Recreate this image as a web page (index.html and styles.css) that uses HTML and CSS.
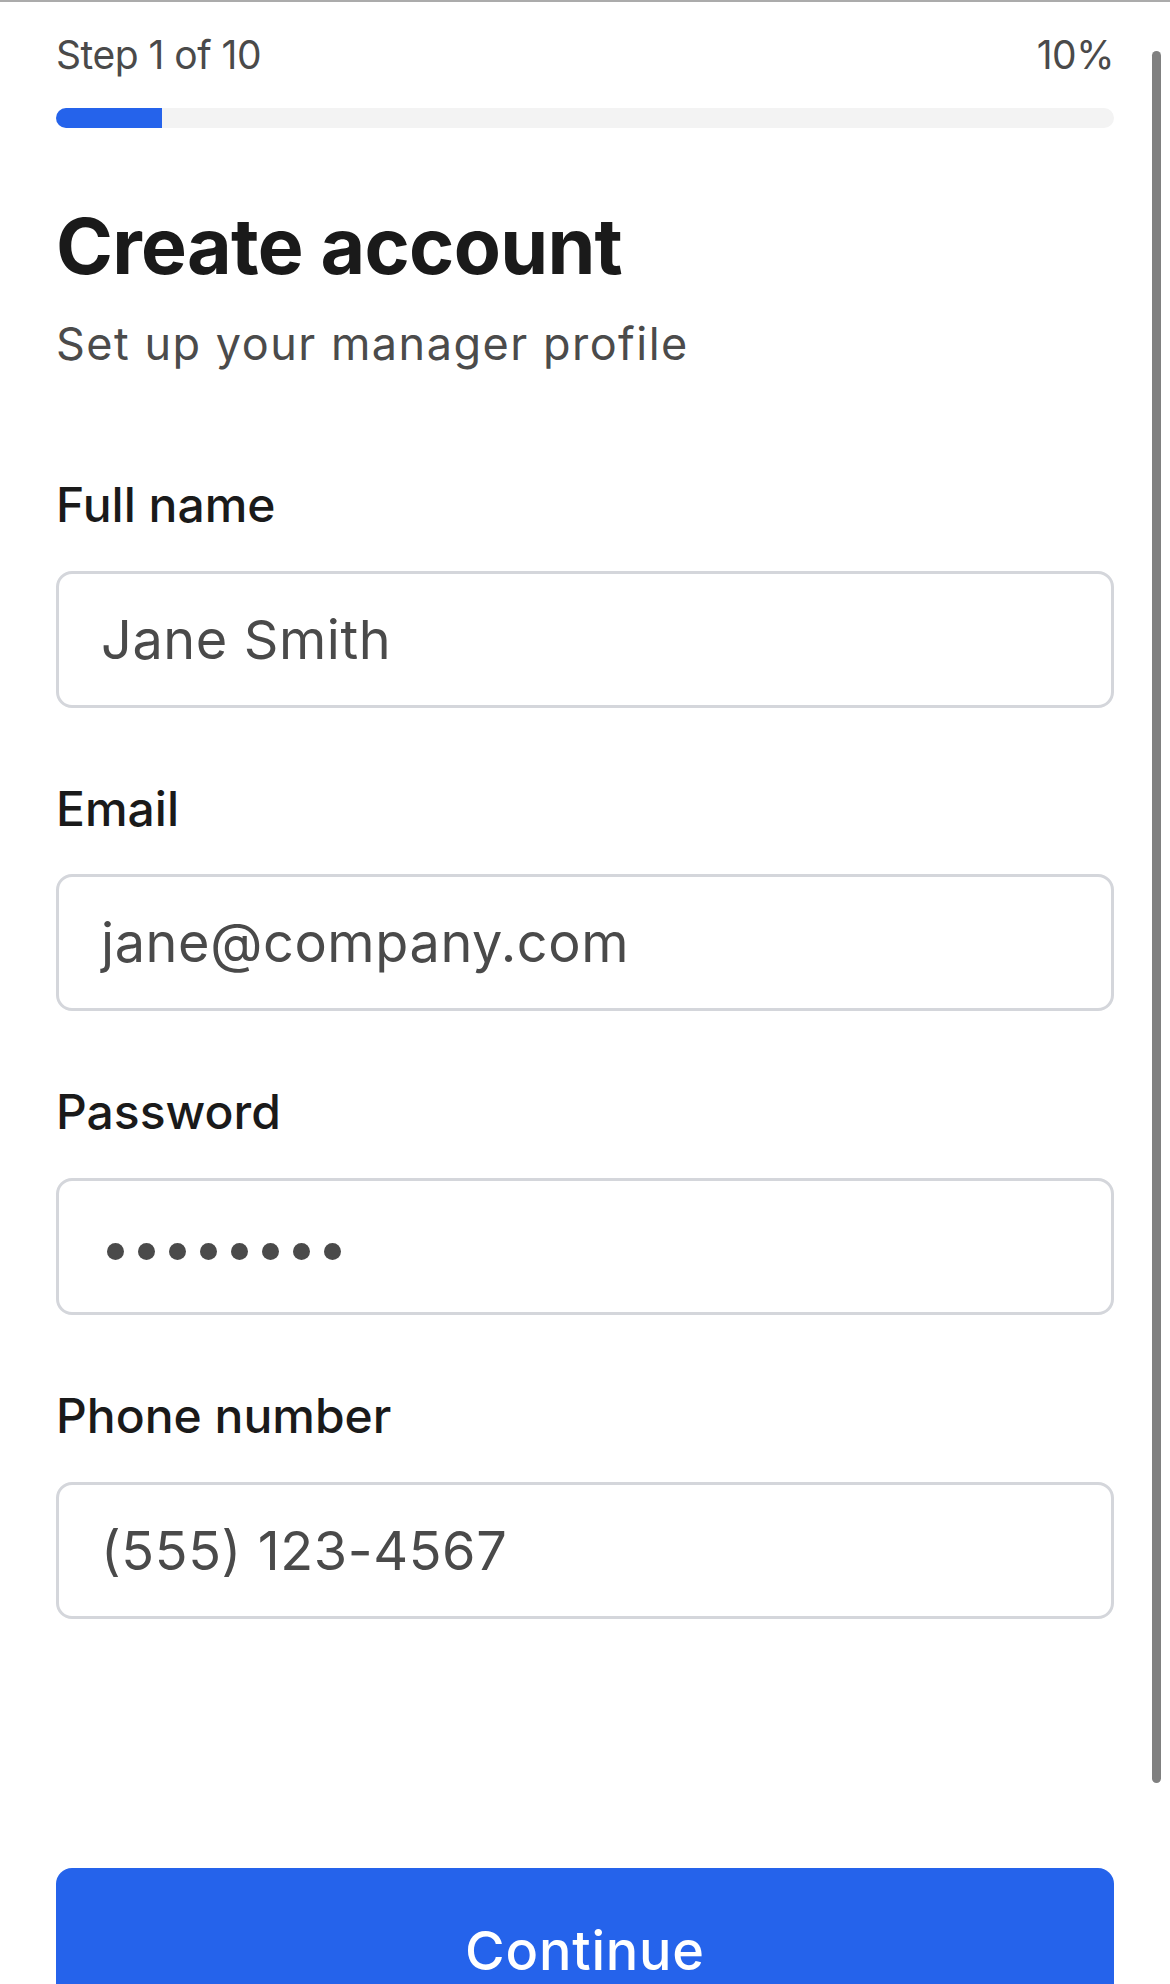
FILE: index.html
```html
<!DOCTYPE html>
<html lang="en">
<head>
<meta charset="utf-8">
<title>Create account</title>
<link rel="stylesheet" href="styles.css">
</head>
<body>
<div class="screen">
  <header class="progress-head">
    <div class="progress-meta">
      <span>Step 1 of 10</span>
      <span>10%</span>
    </div>
    <div class="track"><div class="fill" style="width:10%"></div></div>
  </header>

  <section class="intro">
    <h1 class="title">Create account</h1>
    <p class="subtitle">Set up your manager profile</p>
  </section>

  <form class="form">
    <div class="field">
      <label class="label">Full name</label>
      <div class="input">Jane Smith</div>
    </div>
    <div class="field">
      <label class="label">Email</label>
      <div class="input">jane@company.com</div>
    </div>
    <div class="field">
      <label class="label">Password</label>
      <div class="input" aria-label="password">
        <span class="dots"><i></i><i></i><i></i><i></i><i></i><i></i><i></i><i></i></span>
      </div>
    </div>
    <div class="field">
      <label class="label">Phone number</label>
      <div class="input">(555) 123-4567</div>
    </div>
  </form>

  <div class="footer">
    <button class="primary" type="button">Continue</button>
  </div>

  <div class="scrollbar"></div>
</div>
</body>
</html>
```
FILE: styles.css
```css
* { box-sizing: border-box; }
html, body { margin: 0; padding: 0; background: #ffffff; }
body {
  font-family: Inter, "Noto Sans", "Liberation Sans", sans-serif;
  color: #1a1a1a;
  overflow: hidden;
}
.screen {
  position: relative;
  height: 1984px;
  border-top: 2px solid #ababab;
  padding: 30px 56px 0 56px;
}
.progress-meta {
  display: flex;
  justify-content: space-between;
  font-size: 39px;
  line-height: 1.2;
  letter-spacing: -0.5px;
  color: #4a4a4a;
}
.track {
  margin-top: 29px;
  height: 20px;
  background: #f3f3f3;
  border-radius: 10px;
  overflow: hidden;
}
.fill {
  height: 100%;
  background: #2563eb;
}
.intro { margin-top: 72px; }
.title {
  margin: 0;
  font-size: 77px;
  line-height: 1.2;
  font-weight: 700;
  letter-spacing: -0.7px;
  color: #1a1a1a;
}
.subtitle {
  margin: 25px 0 0 0;
  font-size: 45px;
  line-height: 1.2;
  letter-spacing: 1.5px;
  color: #4b4b4b;
}
.form {
  margin-top: 105px;
  display: flex;
  flex-direction: column;
  gap: 72px;
}
.field {
  display: flex;
  flex-direction: column;
  gap: 37px;
}
.label {
  font-size: 48px;
  line-height: 1.2;
  font-weight: 500;
  color: #1a1a1a;
}
.input {
  height: 137px;
  border: 3px solid #d4d6db;
  border-radius: 16px;
  padding: 0 42px;
  display: flex;
  align-items: center;
  font-size: 54px;
  letter-spacing: 0.6px;
  color: #4a4a4a;
}
.dots {
  display: flex;
  gap: 14px;
  padding-left: 6px;
  margin-top: 10px;
}
.dots i {
  width: 17px;
  height: 17px;
  border-radius: 50%;
  background: #4a4a4a;
}
.footer { margin-top: 249px; }
.primary {
  width: 100%;
  height: 165px;
  border: none;
  border-radius: 16px;
  background: #2563eb;
  color: #ffffff;
  font-family: Inter, "Noto Sans", "Liberation Sans", sans-serif;
  font-size: 54px;
  font-weight: 500;
  letter-spacing: 0.8px;
}
.scrollbar {
  position: absolute;
  top: 49px;
  right: 9px;
  width: 9px;
  height: 1732px;
  border-radius: 5px;
  background: #808080;
}
```
